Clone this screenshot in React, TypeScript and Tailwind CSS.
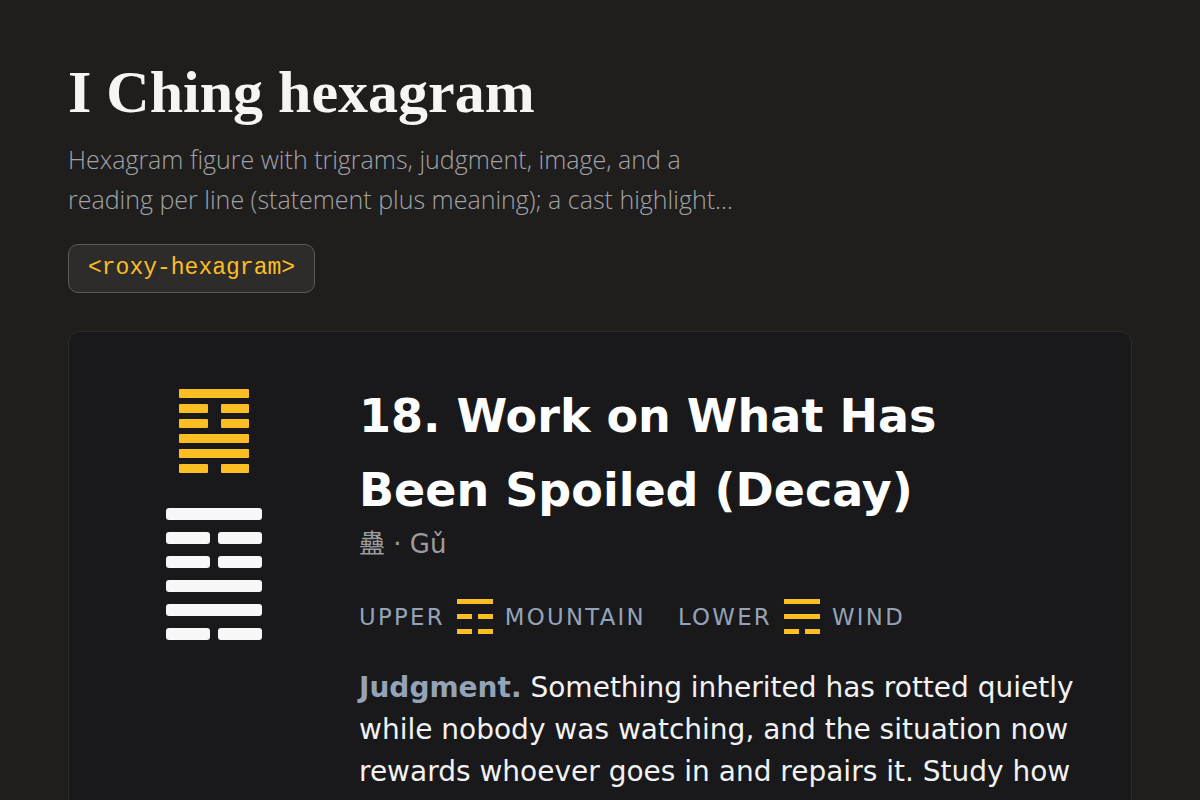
import React from "react";

// Hexagram 18 (Gu): lines listed top to bottom, true = solid (yang)
const lines = [true, false, false, true, true, false];
const mountain = [true, false, false];
const wind = [true, true, false];

function Line({
  solid,
  className,
  gap,
}: {
  solid: boolean;
  className: string;
  gap: string;
}) {
  if (solid) return <div className={`w-full ${className}`} />;
  return (
    <div className={`flex w-full ${gap}`}>
      <div className={`flex-1 ${className}`} />
      <div className={`flex-1 ${className}`} />
    </div>
  );
}

function MiniTrigram({ pattern }: { pattern: boolean[] }) {
  return (
    <div className="flex w-[36px] flex-col gap-[10px]">
      {pattern.map((solid, i) =>
        solid ? (
          <div key={i} className="h-[5px] w-full bg-[#fbbf24]" />
        ) : (
          <div key={i} className="flex w-full gap-[6px]">
            <div className="h-[5px] flex-1 bg-[#fbbf24]" />
            <div className="h-[5px] flex-1 bg-[#fbbf24]" />
          </div>
        )
      )}
    </div>
  );
}

export default function App() {
  return (
    <div className="min-h-screen bg-[#1f1e1d] px-[68px] pt-[59px] pb-16">
      {/* Header */}
      <h1 className="font-['Liberation_Serif',serif] text-[60px] font-bold leading-[1.1] text-[#f7f5f2]">
        I Ching hexagram
      </h1>
      <p className="mt-[14px] max-w-[680px] font-['Open_Sans',sans-serif] text-[25px] font-light leading-[40px] text-[#a2a4a9]">
        Hexagram figure with trigrams, judgment, image, and a reading per line
        (statement plus meaning); a cast highlight…
      </p>
      <div className="mt-[25px] inline-block rounded-[10px] border-[1.5px] border-[#5e5a56] bg-[#2e2c2b] px-[19px] py-[10px] font-['Liberation_Mono',monospace] text-[23px] leading-[27px] text-[#fbbf24]">
        {"<roxy-hexagram>"}
      </div>

      {/* Card */}
      <div className="mt-[38px] flex gap-12 rounded-xl border border-[#2c2c2d] bg-[#19191b] p-12 font-['DejaVu_Sans',sans-serif]">
        <div className="flex w-[194px] shrink-0 flex-col items-center pt-[9px]">
          <div className="flex w-[70px] flex-col gap-[6px]">
            {lines.map((solid, i) => (
              <Line
                key={i}
                solid={solid}
                gap="gap-[13px]"
                className="h-[9px] rounded-[1px] bg-[#fbbf24]"
              />
            ))}
          </div>
          <div className="mt-[35px] flex w-[96px] flex-col gap-[12px]">
            {lines.map((solid, i) => (
              <Line
                key={i}
                solid={solid}
                gap="gap-[8px]"
                className="h-[12px] rounded-[3px] bg-[#f7f7f8]"
              />
            ))}
          </div>
        </div>

        <div className="min-w-0 flex-1">
          <h2 className="max-w-[660px] text-[46px] font-bold leading-[1.6] text-white">
            18. Work on What Has Been Spoiled (Decay)
          </h2>
          <div className="font-['DejaVu_Sans','Noto_Sans_CJK_SC',sans-serif] text-[26px] leading-[34px] text-[#9b9b9d]">
            蠱 · Gǔ
          </div>

          <div className="mt-[38px] flex items-center gap-8 text-[22.8px] tracking-[0.1em] text-[#94a3b8]">
            <div className="flex items-center gap-3">
              <span>UPPER</span>
              <MiniTrigram pattern={mountain} />
              <span>MOUNTAIN</span>
            </div>
            <div className="flex items-center gap-3">
              <span>LOWER</span>
              <MiniTrigram pattern={wind} />
              <span>WIND</span>
            </div>
          </div>

          <p className="mt-[33px] text-[28px] leading-[1.5] text-[#f2f2f3]">
            <span className="font-bold text-[#94a3b8]">Judgment.</span>{" "}
            Something inherited has rotted quietly while nobody was watching,
            and the situation now rewards whoever goes in and repairs it. Study
            how the damage came about before acting, and keep watch after the
            repair so that it holds.
          </p>
          <p className="mt-6 text-[28px] leading-[1.5] text-[#f2f2f3]">
            <span className="font-bold text-[#94a3b8]">Image.</span> The wind
            blows low on the mountain: the superior person stirs up the people
            and strengthens their spirit.
          </p>
        </div>
      </div>
    </div>
  );
}
